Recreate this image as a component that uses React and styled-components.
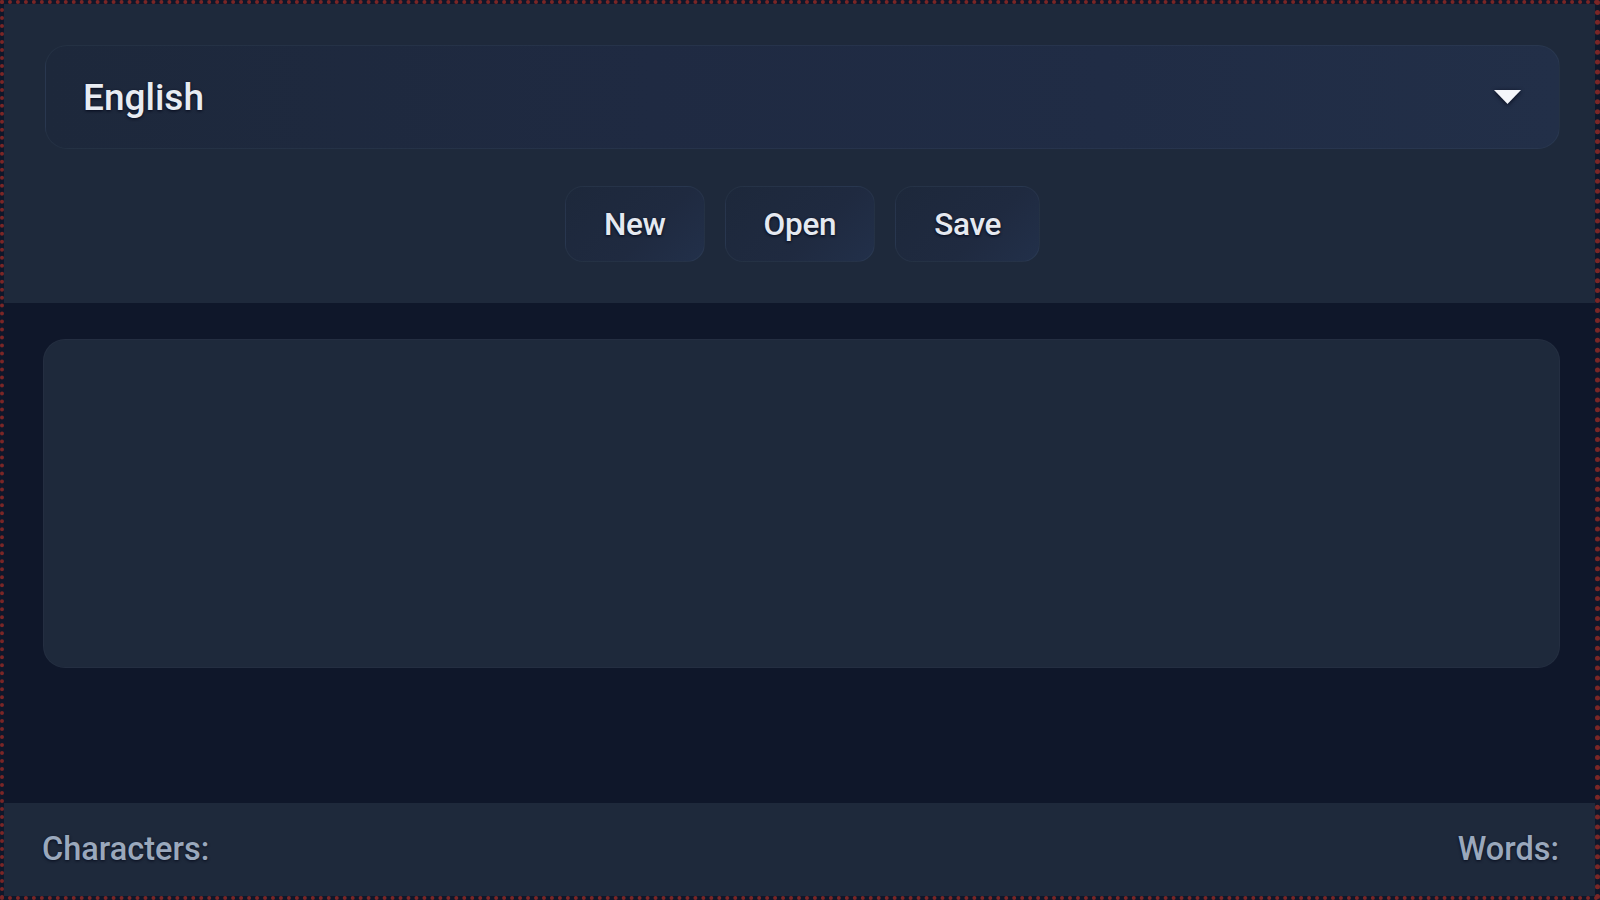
import React from "react";
import styled, { createGlobalStyle } from "styled-components";

const Global = createGlobalStyle`
  html, body { margin: 0; padding: 0; background: #0f172a; }
  * { box-sizing: border-box; }
  body { font-family: Roboto, "Liberation Sans", sans-serif; }
`;

const Frame = styled.div`
  width: 1600px;
  height: 900px;
  border: 4px dotted #7a2626;
  border-right-width: 5px;
  background: #0f172a;
  display: flex;
  flex-direction: column;
  overflow: hidden;
`;

const Header = styled.header`
  background: #1e293b;
  padding: 41px 35px 41px 41px;
  display: flex;
  flex-direction: column;
  gap: 37px;
`;

const Select = styled.div`
  height: 104px;
  border-radius: 22px;
  border: 1px solid rgba(148, 163, 184, 0.07);
  background: linear-gradient(90deg, #1d283b 0%, #1f2a42 40%, #202c45 70%, #222f48 100%);
  display: flex;
  align-items: center;
  justify-content: space-between;
  padding: 0 37px 0 37px;
  cursor: pointer;
`;

const SelectText = styled.span`
  font-size: 37px;
  font-weight: 500;
  color: #e8ecf2;
  text-shadow: 0 1px 3px rgba(2, 6, 23, 0.9);
`;

const Caret = styled.svg`
  width: 29px;
  height: 16px;
  filter: drop-shadow(0 1px 2px rgba(2, 6, 23, 0.9));
`;

const ButtonRow = styled.div`
  display: flex;
  justify-content: center;
  gap: 20px;
`;

const Button = styled.button`
  height: 76px;
  padding: 0 38px;
  border-radius: 18px;
  border: 1px solid rgba(148, 163, 184, 0.07);
  background: linear-gradient(135deg, #1d283b 0%, #1f2a40 60%, #22304a 100%);
  color: #e5e9f0;
  font-family: Roboto, "Liberation Sans", sans-serif;
  font-size: 31.5px;
  font-weight: 500;
  letter-spacing: -0.3px;
  text-shadow: 0 1px 3px rgba(2, 6, 23, 0.95);
  cursor: pointer;
`;

const Main = styled.main`
  flex: 1;
  background: #0f172a;
  padding: 36px 35px 0 39px;
  display: flex;
  flex-direction: column;
`;

const Editor = styled.textarea`
  height: 329px;
  width: 100%;
  resize: none;
  border-radius: 22px;
  border: 1px solid rgba(148, 163, 184, 0.05);
  background: #1e293b;
  outline: none;
  color: #e2e8f0;
  font-family: Roboto, "Liberation Sans", sans-serif;
  font-size: 28px;
  padding: 24px;
`;

const Footer = styled.footer`
  height: 93px;
  flex-shrink: 0;
  background: #1e293b;
  display: flex;
  align-items: center;
  justify-content: space-between;
  padding: 0 36px 0 38px;
`;

const Stat = styled.span`
  font-size: 32.5px;
  font-weight: 500;
  color: #9aa8bc;
  text-shadow: 0 1px 3px rgba(2, 6, 23, 0.8);
  margin-top: -2px;
`;

export default function App() {
  return (
    <>
      <Global />
      <Frame>
        <Header>
          <Select>
            <SelectText>English</SelectText>
            <Caret viewBox="0 0 29 16">
              <path d="M1 1 L28 1 L14.5 15 Z" fill="#f4f6fa" />
            </Caret>
          </Select>
          <ButtonRow>
            <Button>New</Button>
            <Button>Open</Button>
            <Button>Save</Button>
          </ButtonRow>
        </Header>
        <Main>
          <Editor spellCheck={false} />
        </Main>
        <Footer>
          <Stat>Characters:</Stat>
          <Stat>Words:</Stat>
        </Footer>
      </Frame>
    </>
  );
}
